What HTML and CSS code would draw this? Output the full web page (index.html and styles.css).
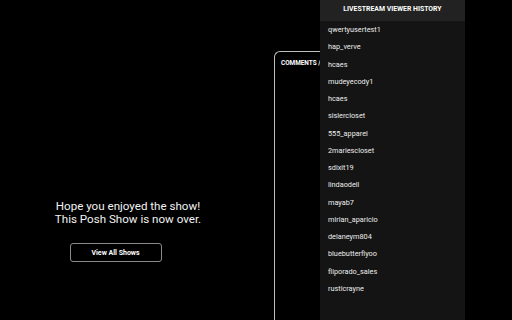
FILE: index.html
```html
<!DOCTYPE html>
<html>
<head>
<meta charset="utf-8">
<link rel="stylesheet" href="styles.css">
</head>
<body>
<div class="page">
  <section class="ended">
    <p class="ended-msg">Hope you enjoyed the show!<br>This Posh Show is now over.</p>
    <button class="btn">View All Shows</button>
  </section>
  <section class="comments">
    <div class="comments-title">COMMENTS /</div>
  </section>
  <aside class="history">
    <div class="history-head">LIVESTREAM VIEWER HISTORY</div>
    <ul class="history-list">
      <li>qwertyusertest1</li>
      <li>hap_verve</li>
      <li>hcaes</li>
      <li>mudeyecody1</li>
      <li>hcaes</li>
      <li>sislercloset</li>
      <li>555_apparel</li>
      <li>2mariescloset</li>
      <li>sdixit19</li>
      <li>lindaodell</li>
      <li>mayab7</li>
      <li>mirian_aparicio</li>
      <li>delaneym804</li>
      <li>bluebutterflyoo</li>
      <li>fliporado_sales</li>
      <li>rusticrayne</li>
    </ul>
  </aside>
</div>
</body>
</html>
```
FILE: styles.css
```css
html, body {
  margin: 0;
  padding: 0;
  background: #000;
  width: 512px;
  height: 320px;
  overflow: hidden;
  font-family: Roboto, "Liberation Sans", Arial, sans-serif;
  color: #fff;
}
.page {
  display: flex;
  height: 320px;
}
.ended {
  width: 256px;
  flex: none;
  display: flex;
  flex-direction: column;
  align-items: center;
  padding-top: 200px;
  box-sizing: border-box;
}
.ended-msg {
  margin: 0;
  font-size: 11.6px;
  line-height: 12.5px;
  text-align: center;
  color: #f2f2f2;
}
.btn {
  margin-top: 18px;
  margin-left: -25px;
  width: 92px;
  height: 19px;
  background: #000;
  border: 1px solid #8a8a8a;
  border-radius: 3px;
  color: #fff;
  font-family: Roboto, "Liberation Sans", Arial, sans-serif;
  font-size: 7px;
  font-weight: 700;
  padding: 0;
}
.comments {
  margin-left: 18px;
  margin-top: 51px;
  width: 46px;
  flex: none;
  border-left: 1px solid #bdbdbd;
  border-top: 1px solid #bdbdbd;
  border-top-left-radius: 6px;
  overflow: hidden;
  box-sizing: border-box;
}
.comments-title {
  white-space: nowrap;
  font-size: 6.4px;
  font-weight: 700;
  padding: 7px 0 0 6px;
  color: #fff;
}
.history {
  width: 145px;
  flex: none;
  background: #141414;
  display: flex;
  flex-direction: column;
}
.history-head {
  height: 21px;
  background: #222;
  font-size: 6.9px;
  font-weight: 700;
  text-align: center;
  line-height: 19px;
  color: #fff;
}
.history-list {
  list-style: none;
  margin: 0;
  padding: 4px 0 0 8px;
}
.history-list li {
  font-size: 7.3px;
  height: 17.25px;
  line-height: 10px;
  color: #ececec;
}
```
